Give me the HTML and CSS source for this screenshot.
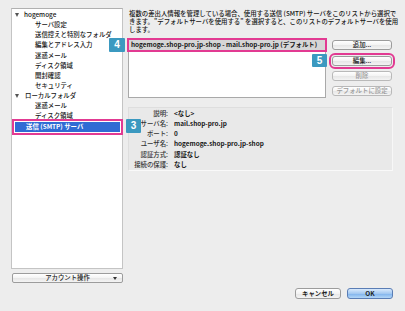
FILE: index.html
```html
<!DOCTYPE html>
<html lang="ja">
<head>
<meta charset="utf-8">
<title>送信 (SMTP) サーバ</title>
<link rel="stylesheet" href="styles.css">
</head>
<body>
<div class="window">
  <div class="main">
    <div class="left">
      <div class="tree">
        <div class="row top"><span class="arrow"></span>hogemoge</div>
        <div class="row child">サーバ設定</div>
        <div class="row child">送信控えと特別なフォルダ</div>
        <div class="row child">編集とアドレス入力</div>
        <div class="row child">迷惑メール</div>
        <div class="row child">ディスク領域</div>
        <div class="row child">開封確認</div>
        <div class="row child">セキュリティ</div>
        <div class="row top"><span class="arrow"></span>ローカルフォルダ</div>
        <div class="row child">迷惑メール</div>
        <div class="row child">ディスク領域</div>
        <div class="row selected mark">送信 (SMTP) サーバ</div>
      </div>
      <div class="btn menu-btn">アカウント操作<span class="caret"></span></div>
    </div>
    <div class="right">
      <p class="desc">複数の差出人情報を管理している場合、使用する送信 (SMTP) サーバをこのリストから選択で<br>きます。"デフォルトサーバを使用する" を選択すると、このリストのデフォルトサーバを使用<br>します。</p>
      <div class="list-area">
        <div class="listbox">
          <div class="item mark">hogemoge.shop-pro.jp-shop - mail.shop-pro.jp (デフォルト)</div>
        </div>
        <div class="actions">
          <div class="btn">追加...</div>
          <div class="btn mark-btn">編集...</div>
          <div class="btn disabled">削除</div>
          <div class="btn disabled">デフォルトに設定</div>
        </div>
      </div>
      <div class="details">
        <span class="label">説明:</span><span class="value">&lt;なし&gt;</span>
        <span class="label">サーバ名:</span><span class="value">mail.shop-pro.jp</span>
        <span class="label">ポート:</span><span class="value">0</span>
        <span class="label">ユーザ名:</span><span class="value">hogemoge.shop-pro.jp-shop</span>
        <span class="label">認証方式:</span><span class="value">認証なし</span>
        <span class="label">接続の保護:</span><span class="value">なし</span>
      </div>
    </div>
  </div>
  <div class="footer">
    <div class="btn dlg-btn">キャンセル</div>
    <div class="btn dlg-btn default">OK</div>
  </div>
  <span class="badge badge-3">3</span>
  <span class="badge badge-4">4</span>
  <span class="badge badge-5">5</span>
</div>
</body>
</html>
```

FILE: styles.css
```css
html, body {
  margin: 0;
  padding: 0;
}
body {
  background: #ededed;
  font-family: "Noto Sans CJK JP", "Liberation Sans", sans-serif;
  font-size: 6.4px;
  font-weight: 500;
  color: #161616;
}
.window {
  position: relative;
  width: 405px;
  height: 311px;
  box-sizing: border-box;
  padding: 8px 12px 0 11px;
  display: flex;
  flex-direction: column;
}
.main {
  display: flex;
  gap: 5px;
}
.left {
  width: 112px;
  display: flex;
  flex-direction: column;
}
.tree {
  height: 261px;
  box-sizing: border-box;
  background: #fff;
  border: 1px solid #c4c4c4;
  border-top-color: #b0b0b0;
  padding-top: 1px;
}
.row {
  height: 10.15px;
  line-height: 10.15px;
  white-space: nowrap;
  display: flex;
  align-items: center;
}
.row.top {
  padding-left: 3px;
}
.row.child {
  padding-left: 23px;
}
.arrow {
  width: 0;
  height: 0;
  border-left: 2.5px solid transparent;
  border-right: 2.5px solid transparent;
  border-top: 4px solid #555;
  margin-right: 5px;
}
.row.top:nth-child(9) .arrow {
  margin-right: 6px;
}
.row.selected {
  margin: 0 2px 0 3px;
  padding-left: 11px;
  background: #2f6bd4;
  color: #fff;
  font-weight: 700;
}
.mark {
  outline: 2px solid #e23a92;
  outline-offset: 1px;
}
.btn {
  box-sizing: border-box;
  height: 10px;
  line-height: 8px;
  text-align: center;
  border: 1px solid #9c9c9c;
  border-radius: 3px;
  background: linear-gradient(#ffffff, #f3f3f3 50%, #e6e6e6 51%, #f4f4f4);
  color: #222;
  white-space: nowrap;
}
.menu-btn {
  margin-top: 4px;
  margin-left: 1px;
  position: relative;
  border-radius: 2px;
}
.caret {
  position: absolute;
  right: 5px;
  top: 3px;
  width: 0;
  height: 0;
  border-left: 2px solid transparent;
  border-right: 2px solid transparent;
  border-top: 3px solid #333;
}
.right {
  width: 265px;
  display: flex;
  flex-direction: column;
}
.desc {
  margin: 2px 0 0 1px;
  line-height: 7.8px;
  white-space: nowrap;
}
.list-area {
  display: flex;
  margin-top: 5px;
}
.listbox {
  width: 198px;
  height: 60px;
  box-sizing: border-box;
  background: #fff;
  border: 1px solid #a9a9a9;
  padding-top: 1px;
}
.item {
  height: 10px;
  line-height: 10px;
  background: #d6d6d6;
  font-weight: 700;
  padding-left: 2px;
  white-space: nowrap;
}
.item.mark {
  outline-offset: 0;
}
.actions {
  width: 60px;
  margin-left: 6px;
  padding-top: 2px;
  display: flex;
  flex-direction: column;
  gap: 5.3px;
}
.mark-btn {
  outline: 2px solid #e23a92;
  outline-offset: 1px;
}
.btn.disabled {
  color: #9a9a9a;
  border-color: #b9b9b9;
}
.details {
  margin-top: 9px;
  height: 64px;
  box-sizing: border-box;
  background: #e9e9e9;
  border: 1px solid #dedede;
  border-right-color: #f7f7f7;
  border-bottom-color: #f9f9f9;
  padding: 0.5px 0 0 2px;
  display: grid;
  grid-template-columns: 37px 1fr;
  column-gap: 6px;
  grid-auto-rows: 10.2px;
  line-height: 10.2px;
  align-content: start;
}
.label {
  text-align: right;
  white-space: nowrap;
  color: #333;
}
.value {
  font-weight: 700;
  white-space: nowrap;
}
.footer {
  display: flex;
  justify-content: flex-end;
  gap: 6px;
  margin-top: 5px;
}
.dlg-btn {
  width: 46px;
  height: 11px;
  line-height: 9px;
  font-weight: 700;
}
.dlg-btn.default {
  border-color: #5a7db5;
  background: linear-gradient(#d9eafc, #a3c8f1 50%, #7cb1ec 51%, #b3d6f7);
}
.badge {
  position: absolute;
  width: 15px;
  height: 14px;
  line-height: 14px;
  text-align: center;
  background: #3b99c0;
  color: #fff;
  font-family: "Liberation Sans", sans-serif;
  font-weight: 700;
  font-size: 10px;
  border-radius: 1px;
}
.badge-3 {
  left: 126px;
  top: 119px;
}
.badge-4 {
  left: 109px;
  top: 38px;
  width: 16px;
}
.badge-5 {
  left: 312px;
  top: 54px;
  height: 13px;
}
```
